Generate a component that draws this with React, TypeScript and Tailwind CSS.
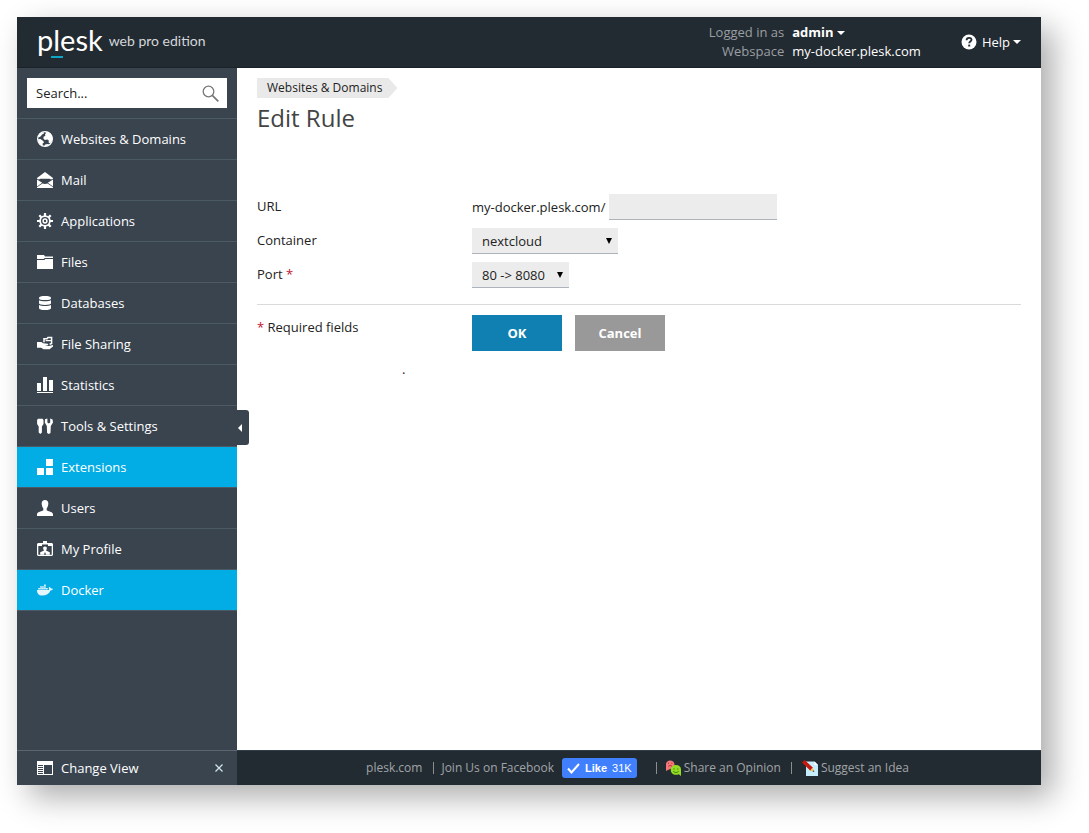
import type { ReactNode } from "react";
import { FaDocker } from "react-icons/fa";

function Icon({ children, className = "h-4 w-4" }: { children: ReactNode; className?: string }) {
  return (
    <svg viewBox="0 0 16 16" className={`${className} shrink-0`} fill="currentColor" aria-hidden="true">
      {children}
    </svg>
  );
}

const GlobeIcon = () => (
  <Icon>
    <circle cx="8" cy="8" r="7.4" fill="none" stroke="currentColor" strokeWidth="1.2" />
    <path d="M8.600 1.200 11 1l3.200 2.600L15.400 7l-.6 3.600-1.600 2-1.600-1 .2-2.200-1.400-1-2.600.6-1.400-1.400.2-1.800 1.800-1-.4-1.600.8-.6Z" />
    <path d="M1.200 5.200 3 2.600 6.600 1.200 7 2.600 5 3.600 3.800 5.200 2.200 6.200Z" />
    <path d="M1 8.200 3.400 8l2.800 2 .8 1.400-1.400 1.200.2 2.200-2.400-1.200L1.400 11Z" />
    <path d="M8 13.600 11 13l1.200.8L9.600 15.200H7.400Z" />
  </Icon>
);

const MailIcon = () => (
  <Icon>
    <path d="M8 0 16 6v.8l-2 .6-1.400-.6H3.400L2 7.400l-2-.6V6Z" />
    <path d="M0 7.400 5.200 10.800 0 14.400ZM16 7.400 10.800 10.800 16 14.400Z" />
    <path d="M0 16v-.8L5.400 11.600c1.700.6 3.500.6 5.200 0l5.400 3.600v.8Z" />
  </Icon>
);

const GearIcon = () => (
  <Icon>
    <g stroke="currentColor" fill="none">
      <circle cx="8" cy="8" r="4.900" strokeWidth="1.800" />
      <circle cx="8" cy="8" r="1.900" strokeWidth="1.500" />
      <path
        strokeWidth="2.200"
        d="M8 0v3M8 13v3M0 8h3M13 8h3M2.300 2.300l2.100 2.100M11.600 11.600l2.100 2.100M2.300 13.700l2.100-2.100M11.600 4.400l2.100-2.100"
      />
    </g>
  </Icon>
);

const FolderIcon = () => (
  <Icon>
    <path d="M0 1h7l1 1.500h8V4H7.800L6.600 5H0Z" />
    <path d="M0 6h7.200l1.200-1H16v10H0Z" />
  </Icon>
);

const DatabaseIcon = () => (
  <Icon>
    <path d="M2 2.600C2 1.500 4.400 1 8 1s6 .5 6 1.600v1C14 4.600 11.600 5.100 8 5.100S2 4.600 2 3.600Z" />
    <path d="M2 5.300c1.300.8 3.500 1 6 1s4.700-.2 6-1v3c0 1-2.400 1.600-6 1.600s-6-.6-6-1.600Z" />
    <path d="M2 10c1.300.8 3.500 1 6 1s4.700-.2 6-1v3.200c0 1.100-2.400 1.800-6 1.800s-6-.7-6-1.800Z" />
  </Icon>
);

const ShareIcon = () => (
  <Icon>
    <path d="M0 6h4.400l1.800 1.200 4.600.6.600 1.200-3.400.6 4 .4L16 9v1.600l-3.400 2.600H6.400L4.200 11.800H0Z" />
    <path d="M7 6.200V2.800h3l1-1.200h3.600v5.800l-2 .8" fill="none" stroke="currentColor" strokeWidth="1.500" />
    <path d="M8.600 4.600H14" stroke="currentColor" strokeWidth="1.200" />
  </Icon>
);

const ChartIcon = () => (
  <Icon>
    <path d="M0 6h4v8H0ZM6 0h4v14H6ZM12 3h4v11h-4ZM0 15h16v1H0Z" />
  </Icon>
);

const ToolsIcon = () => (
  <Icon>
    <path d="M1 .8h4.600l.9 1.200v4L4.900 8.600v6L3.300 16 1.700 14.600v-6L.1 6V2Z" />
    <path d="M8 1.200 10.400.6v4l1.400 1 1.400-1v-4l2.400.8.4 3-2.200 3.600-.3 7-1.700 1-1.700-1-.3-7L7.800 4.400Z" />
  </Icon>
);

const BlocksIcon = () => (
  <Icon>
    <path d="M9 0h7v7H9ZM0 9h7v7H0ZM9 9h7v7H9Z" />
  </Icon>
);

const UserIcon = () => (
  <Icon>
    <path d="M8 0c2.300 0 3.500 1.600 3.300 4-.1 1.900-.8 3.500-1.600 4.400v2c2.500 1 6.300 1.400 6.300 4V16H0v-1.600c0-2.600 3.800-3 6.300-4v-2C5.500 7.500 4.800 5.900 4.700 4 4.500 1.600 5.700 0 8 0Z" />
  </Icon>
);

const BadgeIcon = () => (
  <Icon>
    <path d="M6 0h4v2h5l1 1v11l-1 1H1l-1-1V3l1-1h5ZM1.300 5v8.700h13.400V5H11V3.600H5V5Z" fillRule="evenodd" />
    <path d="M8 5.400c1.500 0 2 .9 1.800 2.200-.1.900-.5 1.500-.9 1.900l3.900 1.700v2.600H9.200L8 11l-1.200 2.800H3.200v-2.600l3.900-1.700c-.4-.4-.8-1-.9-1.900C6 6.300 6.500 5.400 8 5.400Z" />
  </Icon>
);

const LayoutIcon = () => (
  <Icon>
    <path d="M0 1h16v14H0ZM7 5v9h8V5ZM1 5v1h5V5ZM1 7v1h5V7ZM1 9v1h5V9ZM1 11v1h5v-1ZM1 13v1h5v-1Z" fillRule="evenodd" />
  </Icon>
);

const OpinionIcon = () => (
  <Icon>
    <path d="M1 11V4.500C1 1.900 2.800.4 5.200.4S9.500 2 9.500 4.600 7.600 9 5 9Z" fill="#f4777a" />
    <path d="M3 3.200h1M6.300 3.200h1M3.400 6.400c1-1.200 2.600-1.200 3.600 0" stroke="#a9302f" fill="none" />
    <path d="M16 16V9.600C16 6.600 13.900 5 11 5S5.800 7 5.800 9.900s2.200 4.900 5.100 4.900c1.200 0 2.200-.2 2.900-.6Z" fill="#93dc22" />
    <path d="M9 8.300v1.300M12.800 8.300v1.300M8.200 11c1.200 2 4.400 2 5.500 0" stroke="#3f7a10" fill="none" />
  </Icon>
);

const IdeaIcon = () => (
  <Icon>
    <path d="M4 1.500h8.500L16 5v11H4Z" fill="#c5ecfc" />
    <path d="M12.500 1.500V5H16Z" fill="#fff" />
    <path d="M0 2.600 2.600 0l8.400 7.800-2.600 2.900Z" fill="#c4190c" />
    <path d="m10.600 7.600 1.700 4.200-4.100-1.400Z" fill="#f2c55c" />
    <path d="m12.400 12-1.900-.6 1.100-1.100Z" fill="#333" />
  </Icon>
);

const navItems: { label: string; icon: ReactNode; active?: boolean }[] = [
  { label: "Websites & Domains", icon: <GlobeIcon /> },
  { label: "Mail", icon: <MailIcon /> },
  { label: "Applications", icon: <GearIcon /> },
  { label: "Files", icon: <FolderIcon /> },
  { label: "Databases", icon: <DatabaseIcon /> },
  { label: "File Sharing", icon: <ShareIcon /> },
  { label: "Statistics", icon: <ChartIcon /> },
  { label: "Tools & Settings", icon: <ToolsIcon /> },
  { label: "Extensions", icon: <BlocksIcon />, active: true },
  { label: "Users", icon: <UserIcon /> },
  { label: "My Profile", icon: <BadgeIcon /> },
  { label: "Docker", icon: <FaDocker className="h-4 w-4 shrink-0 opacity-90" aria-hidden="true" />, active: true },
];

function Caret() {
  return (
    <svg viewBox="0 0 8 4" className="h-1 w-2" fill="currentColor" aria-hidden="true">
      <path d="M0 0h8L4 4Z" />
    </svg>
  );
}

function Header() {
  return (
    <header className="flex h-[51px] items-center border-b border-[#1a2127] bg-[#232b32] px-5 text-white">
      <a href="#" className="flex items-center gap-[6px] pb-[2px] font-['Lato',sans-serif]">
        <span className="relative pb-[2px] text-[29px] leading-8">
          plesk
          <span className="absolute bottom-0 left-[14px] h-[2px] w-3 bg-[#0fa5c4]" />
        </span>
        <span className="text-sm text-[#d3d7da]">web pro edition</span>
      </a>
      <dl className="ml-auto grid grid-cols-[auto_auto] gap-x-2 leading-[19px]">
        <dt className="text-right text-[#9a9fa3]">Logged in as</dt>
        <dd>
          <button type="button" className="flex items-center gap-[3px] font-bold">
            admin <Caret />
          </button>
        </dd>
        <dt className="text-right text-[#9a9fa3]">Webspace</dt>
        <dd>
          <a href="#">my-docker.plesk.com</a>
        </dd>
      </dl>
      <button type="button" className="ml-10 flex items-center gap-1">
        <svg viewBox="0 0 16 16" className="mr-px h-4 w-4" aria-hidden="true">
          <circle cx="8" cy="8" r="7.500" fill="#fff" />
          <path d="M5.600 6.200c0-1.600 1-2.400 2.500-2.400s2.400.8 2.400 2c0 1.700-2.300 1.700-2.300 3.400" fill="none" stroke="#232b32" strokeWidth="1.800" />
          <path d="M7.200 10.600h2v1.900h-2Z" fill="#232b32" />
        </svg>
        <span className="flex items-center gap-[3px]">
          Help <Caret />
        </span>
      </button>
    </header>
  );
}

function Sidebar() {
  return (
    <aside className="relative flex w-[220px] shrink-0 flex-col bg-[#39444f] text-white">
      <form className="p-[10px]" role="search">
        <div className="flex h-[30px] items-center bg-white pr-2 pl-[9px]">
          <input
            type="search"
            aria-label="Search"
            placeholder="Search..."
            className="w-full min-w-0 text-[#222] outline-none placeholder:text-[#222]"
          />
          <button type="submit" aria-label="Search" className="text-[#777]">
            <svg viewBox="0 0 17 17" className="h-[17px] w-[17px]" fill="none" stroke="currentColor" aria-hidden="true">
              <circle cx="6.500" cy="6.500" r="5.300" strokeWidth="1.300" />
              <path d="m10.300 10.300 6 6" strokeWidth="1.700" />
            </svg>
          </button>
        </div>
      </form>
      <nav className="border-b border-[#4c5a66]">
        <ul>
          {navItems.map((item) => (
            <li key={item.label} className="border-t border-[#4c5a66]">
              <a
                href="#"
                className={`flex h-10 items-center gap-2 px-5 ${item.active ? "bg-[#02ace4]" : ""}`}
              >
                {item.icon}
                {item.label}
              </a>
            </li>
          ))}
        </ul>
      </nav>
      <div className="mt-auto flex h-[35px] items-center justify-between border-t border-[#5b666f] pr-[14px] pl-5">
        <button type="button" className="flex items-center gap-2">
          <LayoutIcon />
          Change View
        </button>
        <button type="button" aria-label="Close" className="text-[#d5e6ea]">
          <svg viewBox="0 0 8 8" className="h-2 w-2" fill="none" stroke="currentColor" strokeWidth="1.200" aria-hidden="true">
            <path d="m.5.500 7 7M7.500.5l-7 7" />
          </svg>
        </button>
      </div>
      <button
        type="button"
        aria-label="Collapse sidebar"
        className="absolute top-[342px] left-full flex h-[35px] w-3 items-center rounded-r-[3px] bg-[#39444f]"
      >
        <svg viewBox="0 0 4 8" className="ml-px h-2 w-1" fill="currentColor" aria-hidden="true">
          <path d="M4 0v8L0 4Z" />
        </svg>
      </button>
    </aside>
  );
}

function SelectBox({ id, value, className }: { id: string; value: string; className: string }) {
  return (
    <div className={`relative ${className}`}>
      <select
        id={id}
        className="h-[26px] w-full appearance-none border-b border-[#acb3ba] bg-[#ececec] pl-[10px] outline-none"
      >
        <option>{value}</option>
      </select>
      <svg viewBox="0 0 6 6" className="pointer-events-none absolute top-[10px] right-[6px] h-[6px] w-[6px]" aria-hidden="true">
        <path d="M0 0h6L3 6Z" />
      </svg>
    </div>
  );
}

function Main() {
  return (
    <main className="min-w-0 flex-1 bg-white px-5 pt-[10px] text-[#222]">
      <nav aria-label="Breadcrumb" className="flex">
        <a
          href="#"
          className="flex h-5 items-center bg-[#e9e9e9] pr-[15px] pl-[10px] text-xs [clip-path:polygon(0_0,calc(100%-9px)_0,100%_50%,calc(100%-9px)_100%,0_100%)]"
        >
          Websites &amp; Domains
        </a>
      </nav>
      <h1 className="mt-1 text-2xl text-[#444]">Edit Rule</h1>
      <form className="mt-[60px]">
        <div className="grid grid-cols-[215px_1fr] gap-y-2 leading-6">
          <label htmlFor="url">URL</label>
          <div className="flex items-center gap-1">
            <span>my-docker.plesk.com/</span>
            <input id="url" type="text" className="h-[26px] w-[168px] border-b border-[#acb3ba] bg-[#ececec] px-2 outline-none" />
          </div>
          <label htmlFor="container">Container</label>
          <SelectBox id="container" value="nextcloud" className="w-[146px]" />
          <label htmlFor="port">
            Port <span className="text-[#c4122f]">*</span>
          </label>
          <SelectBox id="port" value="80 -> 8080" className="w-[97px]" />
        </div>
        <div className="mt-4 grid grid-cols-[215px_1fr] border-t border-[#dadada] pt-[10px] leading-6">
          <p>
            <span className="text-[#c4122f]">*</span> Required fields
          </p>
          <div className="flex gap-[13px] font-bold text-white">
            <button type="submit" className="h-9 w-[90px] bg-[#107fb1]">
              OK
            </button>
            <button type="button" className="h-9 w-[90px] bg-[#999]">
              Cancel
            </button>
          </div>
        </div>
      </form>
      <p className="mt-2 pl-[145px]">.</p>
    </main>
  );
}

function Footer() {
  return (
    <footer className="flex h-[35px] items-center justify-center border-t border-[#2f3e49] bg-[#232b32] pr-[3px] text-xs text-[#a0a4a8]">
      <a href="#">plesk.com</a>
      <span className="mr-[7px] ml-[11px] h-3 w-px bg-[#8a8f8c]" />
      <a href="#">Join Us on Facebook</a>
      <button
        type="button"
        className="ml-2 flex h-5 items-center gap-[5px] rounded-[3px] bg-[#4080ff] px-[5px] font-['Liberation_Sans',sans-serif] text-[11px] text-white"
      >
        <svg viewBox="0 0 13 11" className="h-[11px] w-[13px]" fill="none" stroke="currentColor" strokeWidth="2" aria-hidden="true">
          <path d="m1 5.500 3.500 4L12 1" />
        </svg>
        <span className="font-bold">Like</span>
        <span>31K</span>
      </button>
      <span className="mr-2 ml-[19px] h-3 w-px bg-[#8a8f8c]" />
      <a href="#" className="flex items-center gap-[3px]">
        <OpinionIcon />
        Share an Opinion
      </a>
      <span className="mx-[10px] h-3 w-px bg-[#8a8f8c]" />
      <a href="#" className="flex items-center gap-[3px]">
        <IdeaIcon />
        Suggest an Idea
      </a>
    </footer>
  );
}

export default function App() {
  return (
    <div className="flex min-h-screen bg-white pt-[17px] pr-12 pb-12 pl-[17px] font-['Open_Sans',sans-serif] text-[13px] leading-5">
      <div className="flex min-w-0 flex-1 flex-col shadow-[12px_12px_30px_rgba(0,0,0,0.33)]">
        <Header />
        <div className="flex flex-1">
          <Sidebar />
          <div className="flex min-w-0 flex-1 flex-col">
            <div className="flex flex-1">
              <Main />
            </div>
            <Footer />
          </div>
        </div>
      </div>
    </div>
  );
}
